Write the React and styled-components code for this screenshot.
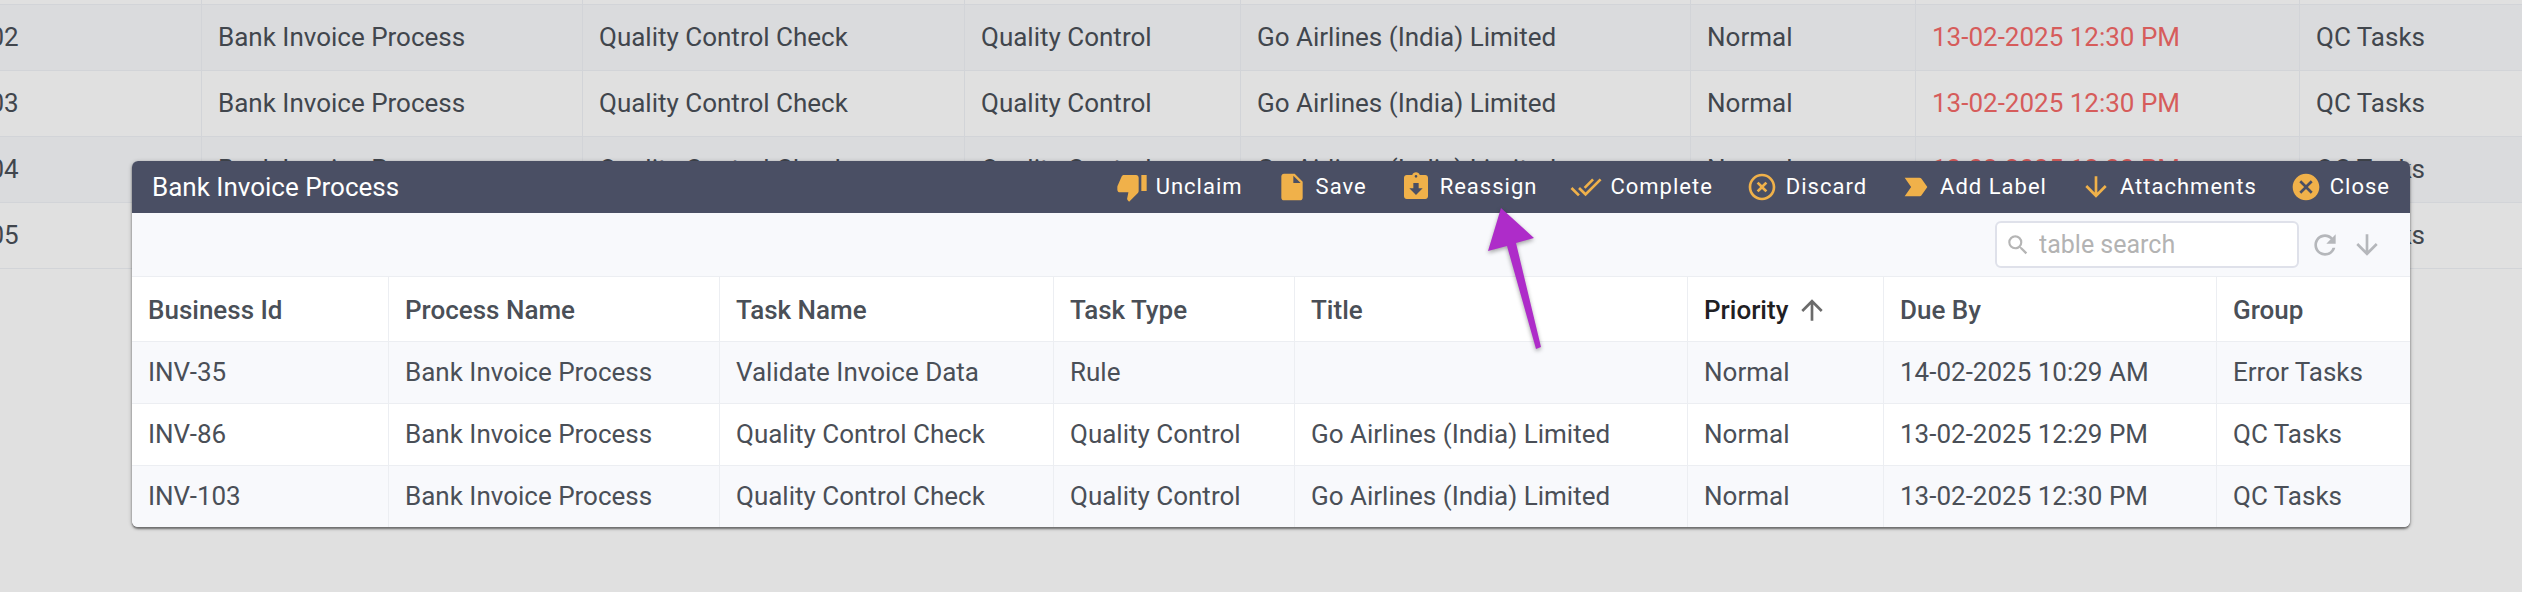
import React from "react";
import styled, { createGlobalStyle } from "styled-components";
import {
  MdThumbDown,
  MdInsertDriveFile,
  MdAssignmentReturned,
  MdDoneAll,
  MdHighlightOff,
  MdLabelImportant,
  MdArrowDownward,
  MdArrowUpward,
  MdCancel,
  MdRefresh,
  MdSearch,
} from "react-icons/md";

const GlobalStyle = createGlobalStyle`
  *, *::before, *::after { box-sizing: border-box; }
  body {
    margin: 0;
    background: #e0e0e0;
    color: #4a4f57;
    font: 400 26px/32px Roboto, "Liberation Sans", sans-serif;
  }
`;

const Page = styled.div`
  position: relative;
  min-height: 100vh;
  overflow: hidden;
`;

const Backdrop = styled.div`
  margin-left: -90px;
  color: #41464d;
`;

const Table = styled.table`
  width: 100%;
  table-layout: fixed;
  border-collapse: separate;
  border-spacing: 0;
`;

const Col = styled.col`
  width: ${(p) => (p.$w ? `${p.$w}px` : "auto")};
`;

const TaskCell = styled.td`
  height: 66px;
  padding: 0 16px 2px;
  white-space: nowrap;
  overflow: hidden;
  background: ${(p) => (p.$shaded ? "#dadbdd" : "#e0e0e0")};
  color: ${(p) => (p.$overdue ? "#d65c5b" : "inherit")};
  border: solid #d2d4d8;
  border-width: 0 1px 1px 0;
  &:last-child { border-right: 0; }
`;

const EdgeCell = styled(TaskCell)`
  height: 5px;
  padding: 0;
`;

const Dialog = styled.section`
  position: absolute;
  top: 161px;
  left: 132px;
  right: 112px;
  background: #f8f9fc;
  border-radius: 6px;
  box-shadow: 0 2px 2px rgba(0, 0, 0, 0.4), 0 1px 4px rgba(0, 0, 0, 0.3);
`;

const TitleBar = styled.header`
  display: flex;
  align-items: center;
  justify-content: space-between;
  height: 52px;
  padding: 0 20px;
  background: #4a4f64;
  color: #fff;
  border-radius: 6px 6px 0 0;
`;

const Heading = styled.h1`
  margin: 0;
  font: inherit;
`;

const Actions = styled.div`
  display: flex;
  gap: 33px;
`;

const ActionSlot = styled.div`
  position: relative;
`;

const Action = styled.button`
  display: flex;
  align-items: center;
  gap: 8px;
  padding: 0;
  border: 0;
  background: none;
  color: #fff;
  font: 400 22px/32px Roboto, "Liberation Sans", sans-serif;
  letter-spacing: 1px;
  svg { width: 32px; height: 32px; color: #f0b14a; }
`;

const Pointer = styled.svg`
  position: absolute;
  z-index: 1;
  top: 34px;
  left: 84px;
  width: 64px;
  height: 150px;
  overflow: visible;
  pointer-events: none;
  filter: drop-shadow(0 2px 2px rgba(0, 0, 0, 0.35));
`;

const Toolbar = styled.div`
  display: flex;
  align-items: center;
  justify-content: flex-end;
  gap: 10px;
  height: 63px;
  padding: 0 27px;
`;

const Search = styled.label`
  display: flex;
  align-items: center;
  gap: 8px;
  width: 304px;
  height: 47px;
  padding: 0 8px;
  background: #fff;
  border: 2px solid #dfe1ea;
  border-radius: 6px;
  color: #b5b5b5;
  svg { flex: none; width: 26px; height: 26px; }
`;

const SearchInput = styled.input`
  flex: 1;
  min-width: 0;
  padding: 0;
  border: 0;
  outline: 0;
  background: none;
  font: 400 25px/32px Roboto, "Liberation Sans", sans-serif;
  color: #4a4f57;
  &::placeholder { color: #b3b3b3; opacity: 1; }
`;

const IconButton = styled.button`
  display: flex;
  padding: 0;
  border: 0;
  background: none;
  color: #b5b7bb;
  svg { width: 32px; height: 32px; }
`;

const HeadCell = styled.th`
  height: 66px;
  padding: 2px 16px 0;
  text-align: left;
  font-weight: 500;
  white-space: nowrap;
  background: #fff;
  border: solid #eceef2;
  border-width: 1px 1px 1px 0;
  &:last-child { border-right: 0; }
`;

const SortButton = styled.button`
  display: flex;
  align-items: center;
  gap: 8px;
  padding: 0;
  border: 0;
  background: none;
  color: #1f2023;
  font: inherit;
  svg { width: 32px; height: 32px; color: #6b6b6b; }
`;

const BodyCell = styled.td`
  height: 62px;
  padding: 0 16px 2px;
  white-space: nowrap;
  overflow: hidden;
  background: ${(p) => (p.$shaded ? "#f8f9fc" : "#fff")};
  border: solid #eceef2;
  border-width: 0 1px 1px 0;
  &:last-child { border-right: 0; }
  tr:last-child > & { height: 61px; border-bottom: 0; }
  tr:last-child > &:first-child { border-bottom-left-radius: 6px; }
  tr:last-child > &:last-child { border-bottom-right-radius: 6px; }
`;

const taskWidths = [292, 381, 382, 276, null, 225, 384, 222];
const tasks = ["102", "103", "104", "105"].map((n) => [
  `INV-${n}`,
  "Bank Invoice Process",
  "Quality Control Check",
  "Quality Control",
  "Go Airlines (India) Limited",
  "Normal",
  "13-02-2025 12:30 PM",
  "QC Tasks",
]);

const widths = [257, 331, 334, 241, null, 196, 333, 193];
const heads = ["Business Id", "Process Name", "Task Name", "Task Type", "Title", "Priority", "Due By", "Group"];
const rows = [
  ["INV-35", "Bank Invoice Process", "Validate Invoice Data", "Rule", "", "Normal", "14-02-2025 10:29 AM", "Error Tasks"],
  ["INV-86", "Bank Invoice Process", "Quality Control Check", "Quality Control", "Go Airlines (India) Limited", "Normal", "13-02-2025 12:29 PM", "QC Tasks"],
  ["INV-103", "Bank Invoice Process", "Quality Control Check", "Quality Control", "Go Airlines (India) Limited", "Normal", "13-02-2025 12:30 PM", "QC Tasks"],
];

const actions = [
  ["Unclaim", MdThumbDown],
  ["Save", MdInsertDriveFile],
  ["Reassign", MdAssignmentReturned],
  ["Complete", MdDoneAll],
  ["Discard", MdHighlightOff],
  ["Add Label", MdLabelImportant],
  ["Attachments", MdArrowDownward],
  ["Close", MdCancel],
];

const Columns = ({ list }) => (
  <colgroup>
    {list.map((w, i) => (
      <Col key={i} $w={w} />
    ))}
  </colgroup>
);

export default function App() {
  return (
    <Page>
      <GlobalStyle />
      <Backdrop>
        <Table>
          <Columns list={taskWidths} />
          <tbody>
            <tr>
              {taskWidths.map((_, i) => (
                <EdgeCell key={i} />
              ))}
            </tr>
            {tasks.map((task, r) => (
              <tr key={task[0]}>
                {task.map((text, c) => (
                  <TaskCell key={c} $shaded={r % 2 === 0} $overdue={c === 6}>
                    {text}
                  </TaskCell>
                ))}
              </tr>
            ))}
          </tbody>
        </Table>
      </Backdrop>

      <Dialog>
        <TitleBar>
          <Heading>Bank Invoice Process</Heading>
          <Actions>
            {actions.map(([label, Icon]) => (
              <ActionSlot key={label}>
                <Action type="button">
                  <Icon aria-hidden="true" />
                  {label}
                </Action>
                {label === "Reassign" && (
                  <Pointer viewBox="0 0 64 150" aria-hidden="true">
                    <path fill="#ae2cc9" d="M17 3L50 33L32 38L57 142L52 144L23 41L4 46Z" />
                  </Pointer>
                )}
              </ActionSlot>
            ))}
          </Actions>
        </TitleBar>
        <Toolbar>
          <Search>
            <MdSearch aria-hidden="true" />
            <SearchInput type="text" placeholder="table search" aria-label="table search" />
          </Search>
          <IconButton type="button" aria-label="Refresh">
            <MdRefresh />
          </IconButton>
          <IconButton type="button" aria-label="Download">
            <MdArrowDownward />
          </IconButton>
        </Toolbar>
        <Table>
          <Columns list={widths} />
          <thead>
            <tr>
              {heads.map((head) => (
                <HeadCell key={head} scope="col" aria-sort={head === "Priority" ? "ascending" : undefined}>
                  {head === "Priority" ? (
                    <SortButton type="button">
                      {head}
                      <MdArrowUpward aria-hidden="true" />
                    </SortButton>
                  ) : (
                    head
                  )}
                </HeadCell>
              ))}
            </tr>
          </thead>
          <tbody>
            {rows.map((row, r) => (
              <tr key={row[0]}>
                {row.map((text, c) => (
                  <BodyCell key={c} $shaded={r % 2 === 0}>
                    {text}
                  </BodyCell>
                ))}
              </tr>
            ))}
          </tbody>
        </Table>
      </Dialog>
    </Page>
  );
}
